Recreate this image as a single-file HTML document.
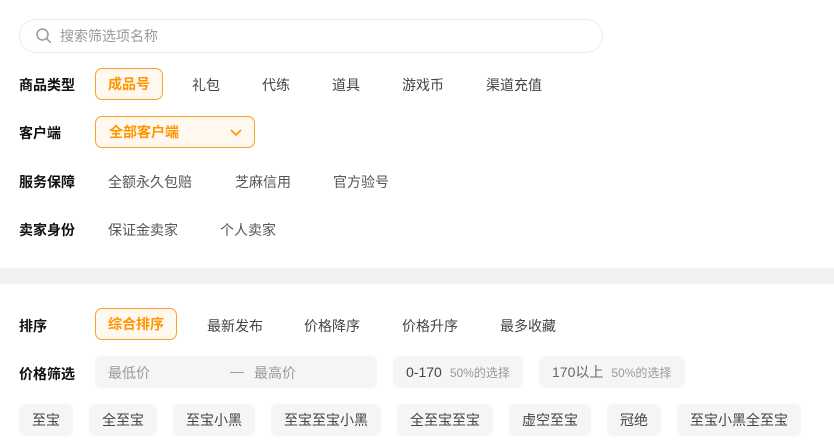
<!DOCTYPE html>
<html><head><meta charset="utf-8"><style>
*{margin:0;padding:0;box-sizing:border-box}
body{width:834px;height:445px;background:#fff;position:relative;overflow:hidden;font-family:"Liberation Sans","Noto Sans CJK SC",sans-serif;color:#333;font-size:14px}
.a{position:absolute;white-space:nowrap}
.lab{font-weight:bold;color:#111;font-size:14px}
.t{color:#444}
.sel{border:1px solid #f7a22a;background:#fff8ee;color:#ff9500;font-weight:bold;border-radius:7px;display:flex;align-items:center;justify-content:center}
.tag{background:#f5f5f5;border-radius:7px;display:flex;align-items:center;justify-content:center;color:#444}
.sm{font-size:14px;color:#555}
</style></head><body>
<div class="a" style="left:19px;top:19px;width:584px;height:34px;border:1px solid #ebebeb;border-radius:17px"></div>
<svg class="a" style="left:35px;top:27px" width="18" height="18" viewBox="0 0 18 18"><circle cx="7.5" cy="7.5" r="5.5" fill="none" stroke="#999" stroke-width="1.5"/><path d="M11.8 11.8l3.5 3.5" stroke="#999" stroke-width="1.5" stroke-linecap="round"/></svg>
<div class="a" style="left:60px;top:26px;color:#999">搜索筛选项名称</div>

<div class="a lab" style="left:19px;top:75px">商品类型</div>
<div class="a sel" style="left:95px;top:68px;width:68px;height:32px">成品号</div>
<div class="a t" style="left:192px;top:75px">礼包</div>
<div class="a t" style="left:262px;top:75px">代练</div>
<div class="a t" style="left:332px;top:75px">道具</div>
<div class="a t" style="left:402px;top:75px">游戏币</div>
<div class="a t" style="left:486px;top:75px">渠道充值</div>

<div class="a lab" style="left:19px;top:123px">客户端</div>
<div class="a sel" style="left:95px;top:116px;width:160px;height:32px;justify-content:flex-start;padding-left:13px">全部客户端</div>
<svg class="a" style="left:229px;top:127px" width="14" height="10" viewBox="0 0 14 10"><path d="M2 3l5 5 5-5" fill="none" stroke="#ff9500" stroke-width="1.6"/></svg>

<div class="a lab" style="left:19px;top:172px">服务保障</div>
<div class="a sm" style="left:108px;top:172px">全额永久包赔</div>
<div class="a sm" style="left:235px;top:172px">芝麻信用</div>
<div class="a sm" style="left:333px;top:172px">官方验号</div>

<div class="a lab" style="left:19px;top:220px">卖家身份</div>
<div class="a sm" style="left:108px;top:220px">保证金卖家</div>
<div class="a sm" style="left:220px;top:220px">个人卖家</div>

<div class="a" style="left:0;top:268px;width:834px;height:16px;background:#f2f2f2"></div>

<div class="a lab" style="left:19px;top:316px">排序</div>
<div class="a sel" style="left:95px;top:308px;width:82px;height:32px">综合排序</div>
<div class="a t" style="left:207px;top:316px">最新发布</div>
<div class="a t" style="left:304px;top:316px">价格降序</div>
<div class="a t" style="left:402px;top:316px">价格升序</div>
<div class="a t" style="left:500px;top:316px">最多收藏</div>

<div class="a lab" style="left:19px;top:364px">价格筛选</div>
<div class="a" style="left:95px;top:356px;width:282px;height:32px;background:#f5f5f5;border-radius:7px"></div>
<div class="a" style="left:108px;top:363px;color:#999">最低价</div>
<div class="a" style="left:230px;top:363px;color:#999">—</div>
<div class="a" style="left:254px;top:363px;color:#999">最高价</div>
<div class="a tag" style="left:393px;top:356px;width:130px;height:32px;justify-content:flex-start;padding-left:13px">0-170<span style="font-size:12px;color:#999;margin-left:8px">50%的选择</span></div>
<div class="a tag" style="left:539px;top:356px;width:146px;height:32px;justify-content:flex-start;padding-left:13px;color:#666">170以上<span style="font-size:12px;color:#999;margin-left:8px">50%的选择</span></div>

<div class="a tag" style="left:19px;top:404px;width:54px;height:32px">至宝</div>
<div class="a tag" style="left:89px;top:404px;width:68px;height:32px">全至宝</div>
<div class="a tag" style="left:173px;top:404px;width:82px;height:32px">至宝小黑</div>
<div class="a tag" style="left:271px;top:404px;width:110px;height:32px">至宝至宝小黑</div>
<div class="a tag" style="left:397px;top:404px;width:96px;height:32px">全至宝至宝</div>
<div class="a tag" style="left:509px;top:404px;width:82px;height:32px">虚空至宝</div>
<div class="a tag" style="left:607px;top:404px;width:54px;height:32px">冠绝</div>
<div class="a tag" style="left:677px;top:404px;width:124px;height:32px">至宝小黑全至宝</div>
</body></html>
